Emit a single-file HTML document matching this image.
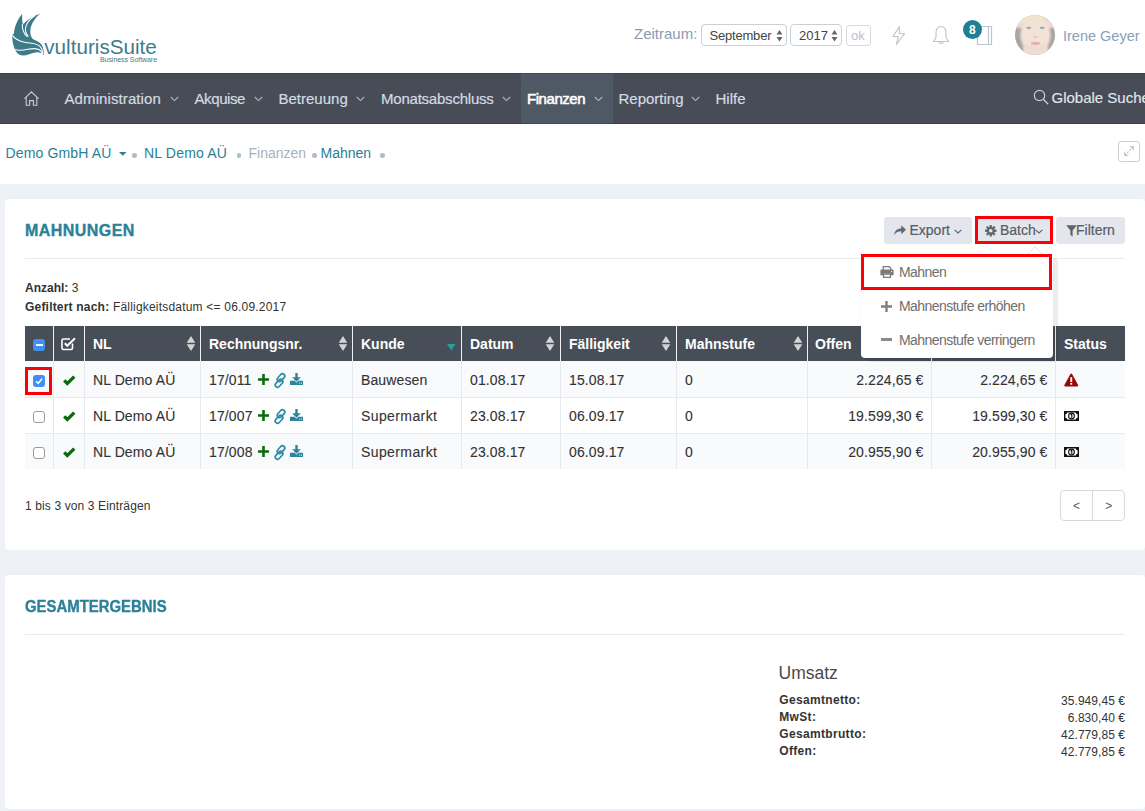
<!DOCTYPE html>
<html><head><meta charset="utf-8">
<style>
*{box-sizing:border-box;margin:0;padding:0}
html,body{width:1145px;height:811px;overflow:hidden;background:#eef1f5;font-family:"Liberation Sans",sans-serif;color:#333}
.a{position:absolute;white-space:nowrap;line-height:1}
svg{position:absolute;overflow:visible}
#top{position:absolute;left:0;top:0;width:1145px;height:73px;background:#fff}
#nav{position:absolute;left:0;top:73px;width:1145px;height:51px;background:#474c57;border-top:1px solid #39414c;border-bottom:1px solid #39414c}
#crumb{position:absolute;left:0;top:124px;width:1145px;height:60px;background:#fff}
.card{position:absolute;left:5px;width:1140px;background:#fff;border-radius:4px}
.nv{font-size:15px;color:#d3dbe3;top:91px;-webkit-text-stroke:0.2px #d3dbe3}
.th{position:absolute;top:326px;height:35px;background:#474e58}
.tht{font-size:14px;font-weight:bold;color:#fff;top:337px}
.row{position:absolute;left:25px;width:1100px;height:37px;border-bottom:1px solid #e6e9ed}
.vl{position:absolute;width:1px;background:#e6e9ed}
.td{font-size:14px;color:#333;letter-spacing:0.12px;-webkit-text-stroke:0.1px #333}
.btn{position:absolute;top:217px;height:27px;background:#e3e7ed;border-radius:3px}
.bt{font-size:14px;color:#585d65;top:223px;-webkit-text-stroke:0.2px #585d65}
.dm{font-size:14px;color:#6e6e6e;letter-spacing:-0.55px}
.sum{font-size:12px;font-weight:bold;color:#333}
.val{font-size:12px;color:#333;text-align:right}
</style></head><body>
<div id="top"></div>
<div id="nav"></div>
<div id="crumb"></div>
<div class="card" style="top:199px;height:351px"></div>
<div class="card" style="top:575px;height:234px"></div>

<!-- LOGO -->
<svg style="left:0;top:0" width="170" height="72" viewBox="0 0 170 72">
 <path fill="#3e7b8a" d="M22.2,13.8 C17.5,19.5 14.4,26.5 13.9,33.7 L12.1,34.6 C12.2,40 12.9,45.5 15.1,49.8 C16.2,52.5 18.5,55 22.2,55.6 C27,55.8 32,52.5 36.5,52.2 C39.5,52 42,53 43.8,55.3 C44,50 43,45.5 40,43 C37.5,41 35,40 33.2,39.2 C31.2,37.8 30,34.5 30.4,30 C31,24.5 34.5,18.5 40.2,13.6 C33,16.5 26.5,20.5 22.8,24.5 C22.2,21 22,17 22.2,13.8 Z"/>
 <g fill="none" stroke="#fff" stroke-width="1.05">
  <path d="M11.3,34.1 C14,38 19,41.5 25.8,42.5 C30,43.1 35,43.3 38.8,45.5 C41.3,47 42.6,50 42.9,54.5"/>
  <path d="M14.3,49.6 C18,50.5 23,50.3 28,49.3 C32,48.5 36,48.3 38.8,49.5 C40.8,50.4 42,52 42.4,54.5"/>
  <path d="M22.4,24 C22,29 23.5,33.5 27.5,36.8"/>
  <path d="M35,15.5 C30,19 26.5,23 25.6,27.5 C25,31 26,34 28.5,36.5"/>
 </g>
 <text x="44.3" y="53.6" font-family="Liberation Sans" font-size="19.8" fill="#3e7b8a" textLength="112.5" lengthAdjust="spacingAndGlyphs">vulturisSuite</text>
 <text x="100" y="62.3" font-family="Liberation Sans" font-size="7" fill="#3e7b8a" textLength="57" lengthAdjust="spacingAndGlyphs">Business Software</text>
</svg>

<!-- ZEITRAUM -->
<div class="a" style="left:634px;top:26px;font-size:15px;color:#8a9bb3">Zeitraum:</div>
<div class="a" style="left:701px;top:24px;width:86px;height:22px;border:1px solid #c9d0d6;border-radius:4px;background:#fff"></div>
<div class="a" style="left:709.5px;top:28.5px;font-size:13px;color:#444;letter-spacing:-0.2px">September</div>
<svg style="left:776px;top:29.5px" width="7" height="12"><path d="M3.5,0 L6.5,4.5 L0.5,4.5 Z M3.5,11.5 L6.5,7 L0.5,7 Z" fill="#666"/></svg>
<div class="a" style="left:790px;top:24px;width:52px;height:22px;border:1px solid #c9d0d6;border-radius:4px;background:#fff"></div>
<div class="a" style="left:799px;top:28.5px;font-size:13px;color:#444">2017</div>
<svg style="left:831px;top:29.5px" width="7" height="12"><path d="M3.5,0 L6.5,4.5 L0.5,4.5 Z M3.5,11.5 L6.5,7 L0.5,7 Z" fill="#666"/></svg>
<div class="a" style="left:846px;top:25px;width:25px;height:21px;border:1px solid #d5dbe0;border-radius:3px;background:#fff"></div>
<div class="a" style="left:851px;top:29px;font-size:13px;color:#b9c3cc">ok</div>

<!-- ICONS -->
<svg style="left:890px;top:24px" width="18" height="22" viewBox="0 0 18 22"><path d="M9.5,2.5 L3,12.5 L8.2,12.5 L6.5,20.5 L14.5,9.5 L9.3,9.5 Z" fill="none" stroke="#bcc6ce" stroke-width="1.2" stroke-linejoin="round"/></svg>
<svg style="left:931px;top:24px" width="20" height="22" viewBox="0 0 20 22"><path d="M10,2.5 C6,2.5 5,6 5,9.5 L5,13.5 L2.5,17.5 L17.5,17.5 L15,13.5 L15,9.5 C15,6 14,2.5 10,2.5 Z M8,18 C8,20 12,20 12,18" fill="none" stroke="#bcc6ce" stroke-width="1.2" stroke-linejoin="round"/></svg>
<svg style="left:975px;top:24px" width="20" height="23" viewBox="0 0 20 23"><path d="M2.5,2.5 L16.5,2.5 L16.5,20.5 L2.5,20.5 Z M13.5,2.5 L13.5,20.5" fill="none" stroke="#bcc6ce" stroke-width="1.2"/></svg>
<div class="a" style="left:963px;top:20px;width:19px;height:19px;border-radius:50%;background:#1f7f94"></div>
<div class="a" style="left:969px;top:23.5px;font-size:12px;font-weight:bold;color:#fff">8</div>

<!-- AVATAR -->
<svg style="left:1015px;top:15px" width="40" height="40" viewBox="0 0 40 40">
 <defs><clipPath id="cp"><circle cx="20" cy="20" r="20"/></clipPath>
 <filter id="bl" x="-0.5" y="-0.5" width="2" height="2"><feGaussianBlur stdDeviation="1.3"/></filter>
 <filter id="bl2" x="-0.5" y="-0.5" width="2" height="2"><feGaussianBlur stdDeviation="0.6"/></filter>
 </defs>
 <g clip-path="url(#cp)">
  <rect width="40" height="40" fill="#a8a5a2"/>
  <g filter="url(#bl)">
   <rect x="-2" y="-2" width="44" height="15" fill="#ecdccd"/>
   <ellipse cx="20.5" cy="20" rx="15" ry="18" fill="#f3e2d7"/>
   <rect x="8" y="30" width="25" height="14" fill="#efdcd0"/>
   <ellipse cx="15" cy="4" rx="14" ry="6" fill="#f2e3cf"/>
  </g>
  <g filter="url(#bl2)">
   <ellipse cx="13.8" cy="12.8" rx="2.6" ry="1.1" fill="#95a6ab"/>
   <ellipse cx="27.2" cy="12.8" rx="2.6" ry="1.1" fill="#95a6ab"/>
   <ellipse cx="20.6" cy="28.3" rx="4.8" ry="1.6" fill="#e2b3a8"/>
   <ellipse cx="20.5" cy="22" rx="2" ry="1.1" fill="#e3c6b9"/>
  </g>
 </g>
</svg>
<div class="a" style="left:1063px;top:29px;font-size:14.5px;color:#8aa0b8">Irene Geyer</div>

<!-- NAV -->
<svg style="left:23px;top:90px" width="17" height="17" viewBox="0 0 17 17"><path d="M1.5,8.6 L8.5,1.8 L15.5,8.6 M3.2,7.2 L3.2,15.2 L6.6,15.2 L6.6,10.6 L10.4,10.6 L10.4,15.2 L13.8,15.2 L13.8,7.2" fill="none" stroke="#c5ccd3" stroke-width="1.1" stroke-linejoin="miter"/></svg>
<div class="a nv" style="left:64.5px;letter-spacing:0.1px">Administration</div><svg style="left:169.5px;top:96px" width="9" height="6" viewBox="0 0 9 6"><path d="M0.8,1 L4.5,4.6 L8.2,1" fill="none" stroke="#aeb7c0" stroke-width="1.1"/></svg>
<div class="a nv" style="left:194.5px;letter-spacing:-0.4px">Akquise</div><svg style="left:254px;top:96px" width="9" height="6" viewBox="0 0 9 6"><path d="M0.8,1 L4.5,4.6 L8.2,1" fill="none" stroke="#aeb7c0" stroke-width="1.1"/></svg>
<div class="a nv" style="left:278.5px">Betreuung</div><svg style="left:356px;top:96px" width="9" height="6" viewBox="0 0 9 6"><path d="M0.8,1 L4.5,4.6 L8.2,1" fill="none" stroke="#aeb7c0" stroke-width="1.1"/></svg>
<div class="a nv" style="left:381px;letter-spacing:-0.22px">Monatsabschluss</div><svg style="left:501.5px;top:96px" width="9" height="6" viewBox="0 0 9 6"><path d="M0.8,1 L4.5,4.6 L8.2,1" fill="none" stroke="#aeb7c0" stroke-width="1.1"/></svg>
<div class="a" style="left:521px;top:73px;width:92px;height:51px;background:#4e5965;border-top:1px solid #404a55;border-bottom:1px solid #404a55"></div>
<div class="a nv" style="left:527px;color:#fff;-webkit-text-stroke:0.55px #fff;letter-spacing:-0.45px">Finanzen</div><svg style="left:594px;top:96px" width="9" height="6" viewBox="0 0 9 6"><path d="M0.8,1 L4.5,4.6 L8.2,1" fill="none" stroke="#aeb7c0" stroke-width="1.1"/></svg>
<div class="a nv" style="left:618.5px">Reporting</div><svg style="left:691px;top:96px" width="9" height="6" viewBox="0 0 9 6"><path d="M0.8,1 L4.5,4.6 L8.2,1" fill="none" stroke="#aeb7c0" stroke-width="1.1"/></svg>
<div class="a nv" style="left:715.5px">Hilfe</div>
<svg style="left:1033px;top:89px" width="17" height="17" viewBox="0 0 17 17"><circle cx="6.5" cy="6.5" r="5.2" fill="none" stroke="#c5ccd3" stroke-width="1.2"/><path d="M10.3,10.3 L15.2,15.2" stroke="#c5ccd3" stroke-width="1.3"/></svg>
<div class="a nv" style="left:1051.5px;top:90px;color:#e3e7eb">Globale Suche</div>

<!-- BREADCRUMB -->
<div class="a" style="left:5.5px;top:145.5px;font-size:14px;color:#2a7f96;letter-spacing:0.15px">Demo GmbH AÜ</div>
<svg style="left:119px;top:152px" width="8" height="4"><path d="M0,0 L7.5,0 L3.75,3.7 Z" fill="#2a7f96"/></svg>
<div class="a" style="left:132px;top:153px;width:4.6px;height:4.6px;border-radius:50%;background:#b3bcc5"></div>
<div class="a" style="left:144px;top:145.5px;font-size:14px;color:#2a7f96;letter-spacing:0.2px">NL Demo AÜ</div>
<div class="a" style="left:236.5px;top:153px;width:4.6px;height:4.6px;border-radius:50%;background:#b3bcc5"></div>
<div class="a" style="left:248.5px;top:145.5px;font-size:14px;color:#a7b1bb">Finanzen</div>
<div class="a" style="left:312px;top:153px;width:4.6px;height:4.6px;border-radius:50%;background:#b3bcc5"></div>
<div class="a" style="left:320.5px;top:145.5px;font-size:14px;color:#2a7f96">Mahnen</div>
<div class="a" style="left:380.2px;top:153px;width:4.6px;height:4.6px;border-radius:50%;background:#b3bcc5"></div>
<div class="a" style="left:1118px;top:141px;width:22px;height:21px;border:1px solid #c8d0d5;border-radius:3px;background:#fff"></div>
<svg style="left:1118px;top:141px" width="22" height="21" viewBox="0 0 22 21"><path d="M6.5,14.5 L15,6" fill="none" stroke="#c3cbd1" stroke-width="1.3" stroke-dasharray="2.2 1.3"/><path d="M11.5,5 L16,5 L16,9.5 Z M6,10.5 L6,15 L10.5,15 Z" fill="#c3cbd1"/></svg>

<!-- CARD 1 -->
<div class="a" style="left:25px;top:223.3px;font-size:16px;font-weight:bold;color:#2a8198;letter-spacing:0.45px;-webkit-text-stroke:0.35px #2a8198">MAHNUNGEN</div>
<div class="a" style="left:25px;top:258px;width:1100px;height:1px;background:#e8ebee"></div>

<div class="btn" style="left:884px;width:88px"></div>
<svg style="left:893px;top:224px" width="14" height="12" viewBox="0 0 16 14"><path d="M1.2,13 C1.5,8 4.5,5.2 9.5,5.2 L9.5,1.6 L15,6.8 L9.5,12 L9.5,8.4 C5.5,8.4 3,9.6 1.2,13 Z" fill="#626770"/></svg>
<div class="a bt" style="left:909.5px">Export</div>
<svg style="left:953.5px;top:228.5px" width="8" height="5" viewBox="0 0 8 5"><path d="M0.6,0.8 L4,4 L7.4,0.8" fill="none" stroke="#5e636b" stroke-width="1.1"/></svg>

<div class="btn" style="left:975px;width:78px"></div>
<div class="a" style="left:975px;top:216px;width:78px;height:28px;border:3px solid #fb0007"></div>
<svg style="left:985px;top:224.6px" width="11.5" height="11.5" viewBox="0 0 13 13"><g fill="#626770"><circle cx="6.5" cy="6.5" r="4.5"/><rect x="5.2" y="0" width="2.6" height="13" rx="0.6"/><rect x="0" y="5.2" width="13" height="2.6" rx="0.6"/><rect x="5.2" y="0" width="2.6" height="13" rx="0.6" transform="rotate(45 6.5 6.5)"/><rect x="5.2" y="0" width="2.6" height="13" rx="0.6" transform="rotate(-45 6.5 6.5)"/></g><circle cx="6.5" cy="6.5" r="2" fill="#e3e7ed"/></svg>
<div class="a bt" style="left:1000px">Batch</div>
<svg style="left:1035px;top:228.5px" width="8" height="5" viewBox="0 0 8 5"><path d="M0.6,0.8 L4,4 L7.4,0.8" fill="none" stroke="#5e636b" stroke-width="1.1"/></svg>

<div class="btn" style="left:1056px;width:69px"></div>
<svg style="left:1066px;top:224.5px" width="11" height="12" viewBox="0 0 11 12"><path d="M0.2,0.3 L10.8,0.3 L6.6,5.6 L6.6,11.7 L4.4,9.8 L4.4,5.6 Z" fill="#5e636b"/></svg>
<div class="a bt" style="left:1076px">Filtern</div>

<div class="a" style="left:25px;top:281.8px;font-size:12px;color:#333"><b>Anzahl:</b> 3</div>
<div class="a" style="left:25px;top:300.6px;font-size:12px;color:#333;letter-spacing:0.2px"><b>Gefiltert nach:</b> Fälligkeitsdatum &lt;= 06.09.2017</div>

<!-- TABLE HEADER -->
<div class="th" style="left:25px;width:28px"></div>
<div class="th" style="left:54px;width:30px"></div>
<div class="th" style="left:85px;width:115px"></div>
<div class="th" style="left:201px;width:151px"></div>
<div class="th" style="left:353px;width:108px"></div>
<div class="th" style="left:462px;width:98px"></div>
<div class="th" style="left:561px;width:115px"></div>
<div class="th" style="left:677px;width:130px"></div>
<div class="th" style="left:808px;width:123px"></div>
<div class="th" style="left:932px;width:123px"></div>
<div class="th" style="left:1056px;width:69px"></div>

<div class="a" style="left:33px;top:339px;width:12px;height:12px;border-radius:3px;background:#3f8ff5"></div>
<div class="a" style="left:35.5px;top:344.3px;width:7px;height:1.8px;background:#fff"></div>
<svg style="left:61px;top:337px" width="16" height="14" viewBox="0 0 16 14"><path d="M11.5,6.5 L11.5,11 C11.5,12 11,12.5 10,12.5 L2.5,12.5 C1.5,12.5 1,12 1,11 L1,3.5 C1,2.5 1.5,2 2.5,2 L9,2" fill="none" stroke="#fff" stroke-width="1.6"/><path d="M3.8,6.3 L6.3,8.8 L14,1.2" fill="none" stroke="#fff" stroke-width="2"/></svg>
<div class="a tht" style="left:93px">NL</div><svg style="left:185.5px;top:335.8px" width="10" height="15" viewBox="0 0 10 15"><path d="M5,0 L9.3,6.8 L0.7,6.8 Z M5,15 L9.3,8.2 L0.7,8.2 Z" fill="#d2d3d5"/></svg>
<div class="a tht" style="left:209px">Rechnungsnr.</div><svg style="left:337.5px;top:335.8px" width="10" height="15" viewBox="0 0 10 15"><path d="M5,0 L9.3,6.8 L0.7,6.8 Z M5,15 L9.3,8.2 L0.7,8.2 Z" fill="#d2d3d5"/></svg>
<div class="a tht" style="left:361px">Kunde</div>
<svg style="left:447px;top:344px" width="9" height="7"><path d="M0,0 L8.6,0 L4.3,6.6 Z" fill="#20a39b"/></svg>
<div class="a tht" style="left:470px">Datum</div><svg style="left:545.0px;top:335.8px" width="10" height="15" viewBox="0 0 10 15"><path d="M5,0 L9.3,6.8 L0.7,6.8 Z M5,15 L9.3,8.2 L0.7,8.2 Z" fill="#d2d3d5"/></svg>
<div class="a tht" style="left:569px">Fälligkeit</div><svg style="left:661.0px;top:335.8px" width="10" height="15" viewBox="0 0 10 15"><path d="M5,0 L9.3,6.8 L0.7,6.8 Z M5,15 L9.3,8.2 L0.7,8.2 Z" fill="#d2d3d5"/></svg>
<div class="a tht" style="left:685px">Mahnstufe</div><svg style="left:792.5px;top:335.8px" width="10" height="15" viewBox="0 0 10 15"><path d="M5,0 L9.3,6.8 L0.7,6.8 Z M5,15 L9.3,8.2 L0.7,8.2 Z" fill="#d2d3d5"/></svg>
<div class="a tht" style="left:815px">Offen</div>
<div class="a tht" style="left:1064px">Status</div>
<div class="row" style="top:361px;background:#f9fafc"></div>
<div class="a" style="left:33px;top:375px;width:12px;height:12px;border-radius:3px;background:#3f8ff5"></div><svg style="left:33px;top:375px" width="12" height="12" viewBox="0 0 12 12"><path d="M3,6.2 L5.2,8.4 L9.2,3.6" fill="none" stroke="#fff" stroke-width="1.5"/></svg><svg style="left:62px;top:375px" width="14" height="11" viewBox="0 0 14 11"><path d="M2.2,5.3 L5.3,8.4 L12.3,1.6" fill="none" stroke="#0b6b0b" stroke-width="3.3" stroke-linejoin="miter"/></svg><div class="a td" style="left:93px;top:373.15px">NL Demo AÜ</div><div class="a td" style="left:209px;top:373.15px">17/011</div><svg style="left:257.8px;top:374.0px" width="11" height="11" viewBox="0 0 11 11"><path d="M4.2,0 H6.8 V4.2 H11 V6.8 H6.8 V11 H4.2 V6.8 H0 V4.2 H4.2 Z" fill="#0b6b0b"/></svg><svg style="left:273px;top:372.5px" width="14" height="15" viewBox="0 0 14 15"><g transform="rotate(-47 7 7.5)" fill="none" stroke="#2b8ca5" stroke-width="1.7"><rect x="5.2" y="4" width="9" height="4.6" rx="2.3"/><rect x="-0.2" y="6.4" width="9" height="4.6" rx="2.3"/></g></svg><svg style="left:290px;top:373.0px" width="13" height="13" viewBox="0 0 13 13"><path d="M5.3,0 H7.7 V4.2 H10.8 L6.5,8.8 L2.2,4.2 H5.3 Z" fill="#2a849c"/><path d="M0,7.8 H4.6 L6.5,9.8 L8.4,7.8 H13 V12 H0 Z" fill="#2a849c"/><rect x="9.2" y="9.6" width="1" height="1" fill="#fff"/><rect x="10.9" y="9.6" width="1" height="1" fill="#fff"/></svg><div class="a td" style="left:361px;top:373.15px">Bauwesen</div><div class="a td" style="left:470px;top:373.15px">01.08.17</div><div class="a td" style="left:569px;top:373.15px">15.08.17</div><div class="a td" style="left:685px;top:373.15px">0</div><div class="a td" style="right:221.5px;top:373.15px">2.224,65 €</div><div class="a td" style="right:97.5px;top:373.15px">2.224,65 €</div><svg style="left:1064px;top:373px" width="14.5" height="13.5" viewBox="0 0 14.5 13.5"><path d="M6.3,1.2 C6.7,0.4 7.8,0.4 8.2,1.2 L14.1,11.9 C14.5,12.6 14,13.4 13.2,13.4 L1.3,13.4 C0.5,13.4 0,12.6 0.4,11.9 Z" fill="#960a0a"/><rect x="6.3" y="4.2" width="1.9" height="4.8" fill="#fff"/><rect x="6.3" y="9.9" width="1.9" height="1.8" fill="#fff"/></svg>
<div class="row" style="top:398px;height:36px;background:#fff"></div>
<div class="a" style="left:33px;top:411px;width:12px;height:12px;border-radius:3px;border:1px solid #9a9a9a;background:#fff"></div><svg style="left:62px;top:411px" width="14" height="11" viewBox="0 0 14 11"><path d="M2.2,5.3 L5.3,8.4 L12.3,1.6" fill="none" stroke="#0b6b0b" stroke-width="3.3" stroke-linejoin="miter"/></svg><div class="a td" style="left:93px;top:409.15px">NL Demo AÜ</div><div class="a td" style="left:209px;top:409.15px">17/007</div><svg style="left:257.8px;top:410.0px" width="11" height="11" viewBox="0 0 11 11"><path d="M4.2,0 H6.8 V4.2 H11 V6.8 H6.8 V11 H4.2 V6.8 H0 V4.2 H4.2 Z" fill="#0b6b0b"/></svg><svg style="left:273px;top:408.5px" width="14" height="15" viewBox="0 0 14 15"><g transform="rotate(-47 7 7.5)" fill="none" stroke="#2b8ca5" stroke-width="1.7"><rect x="5.2" y="4" width="9" height="4.6" rx="2.3"/><rect x="-0.2" y="6.4" width="9" height="4.6" rx="2.3"/></g></svg><svg style="left:290px;top:409.0px" width="13" height="13" viewBox="0 0 13 13"><path d="M5.3,0 H7.7 V4.2 H10.8 L6.5,8.8 L2.2,4.2 H5.3 Z" fill="#2a849c"/><path d="M0,7.8 H4.6 L6.5,9.8 L8.4,7.8 H13 V12 H0 Z" fill="#2a849c"/><rect x="9.2" y="9.6" width="1" height="1" fill="#fff"/><rect x="10.9" y="9.6" width="1" height="1" fill="#fff"/></svg><div class="a td" style="left:361px;top:409.15px;letter-spacing:0.4px">Supermarkt</div><div class="a td" style="left:470px;top:409.15px">23.08.17</div><div class="a td" style="left:569px;top:409.15px">06.09.17</div><div class="a td" style="left:685px;top:409.15px">0</div><div class="a td" style="right:221.5px;top:409.15px">19.599,30 €</div><div class="a td" style="right:97.5px;top:409.15px">19.599,30 €</div><svg style="left:1064px;top:411px" width="15" height="10" viewBox="0 0 15 10"><rect x="0" y="0" width="15" height="10" fill="#111"/><path d="M3.3,1.4 H11.7 A2.1,2.1 0 0 0 13.6,3.3 V6.7 A2.1,2.1 0 0 0 11.7,8.6 H3.3 A2.1,2.1 0 0 0 1.4,6.7 V3.3 A2.1,2.1 0 0 0 3.3,1.4 Z" fill="#fff"/><circle cx="7.5" cy="5" r="2.9" fill="#fff" stroke="#111" stroke-width="1.1"/><path d="M6.6,3.9 L7.8,3.2 V6.9" fill="none" stroke="#111" stroke-width="1.1"/></svg>
<div class="row" style="top:434px;background:#f9fafc;border-bottom:none;height:35px"></div>
<div class="a" style="left:33px;top:447px;width:12px;height:12px;border-radius:3px;border:1px solid #9a9a9a;background:#fff"></div><svg style="left:62px;top:447px" width="14" height="11" viewBox="0 0 14 11"><path d="M2.2,5.3 L5.3,8.4 L12.3,1.6" fill="none" stroke="#0b6b0b" stroke-width="3.3" stroke-linejoin="miter"/></svg><div class="a td" style="left:93px;top:445.15px">NL Demo AÜ</div><div class="a td" style="left:209px;top:445.15px">17/008</div><svg style="left:257.8px;top:446.0px" width="11" height="11" viewBox="0 0 11 11"><path d="M4.2,0 H6.8 V4.2 H11 V6.8 H6.8 V11 H4.2 V6.8 H0 V4.2 H4.2 Z" fill="#0b6b0b"/></svg><svg style="left:273px;top:444.5px" width="14" height="15" viewBox="0 0 14 15"><g transform="rotate(-47 7 7.5)" fill="none" stroke="#2b8ca5" stroke-width="1.7"><rect x="5.2" y="4" width="9" height="4.6" rx="2.3"/><rect x="-0.2" y="6.4" width="9" height="4.6" rx="2.3"/></g></svg><svg style="left:290px;top:445.0px" width="13" height="13" viewBox="0 0 13 13"><path d="M5.3,0 H7.7 V4.2 H10.8 L6.5,8.8 L2.2,4.2 H5.3 Z" fill="#2a849c"/><path d="M0,7.8 H4.6 L6.5,9.8 L8.4,7.8 H13 V12 H0 Z" fill="#2a849c"/><rect x="9.2" y="9.6" width="1" height="1" fill="#fff"/><rect x="10.9" y="9.6" width="1" height="1" fill="#fff"/></svg><div class="a td" style="left:361px;top:445.15px;letter-spacing:0.4px">Supermarkt</div><div class="a td" style="left:470px;top:445.15px">23.08.17</div><div class="a td" style="left:569px;top:445.15px">06.09.17</div><div class="a td" style="left:685px;top:445.15px">0</div><div class="a td" style="right:221.5px;top:445.15px">20.955,90 €</div><div class="a td" style="right:97.5px;top:445.15px">20.955,90 €</div><svg style="left:1064px;top:447px" width="15" height="10" viewBox="0 0 15 10"><rect x="0" y="0" width="15" height="10" fill="#111"/><path d="M3.3,1.4 H11.7 A2.1,2.1 0 0 0 13.6,3.3 V6.7 A2.1,2.1 0 0 0 11.7,8.6 H3.3 A2.1,2.1 0 0 0 1.4,6.7 V3.3 A2.1,2.1 0 0 0 3.3,1.4 Z" fill="#fff"/><circle cx="7.5" cy="5" r="2.9" fill="#fff" stroke="#111" stroke-width="1.1"/><path d="M6.6,3.9 L7.8,3.2 V6.9" fill="none" stroke="#111" stroke-width="1.1"/></svg>
<div class="vl" style="left:53px;top:361px;height:108px"></div><div class="vl" style="left:84px;top:361px;height:108px"></div><div class="vl" style="left:200px;top:361px;height:108px"></div><div class="vl" style="left:352px;top:361px;height:108px"></div><div class="vl" style="left:461px;top:361px;height:108px"></div><div class="vl" style="left:560px;top:361px;height:108px"></div><div class="vl" style="left:676px;top:361px;height:108px"></div><div class="vl" style="left:807px;top:361px;height:108px"></div><div class="vl" style="left:931px;top:361px;height:108px"></div><div class="vl" style="left:1055px;top:361px;height:108px"></div><div class="vl" style="left:53px;top:326px;height:35px;background:#f0f2f4"></div><div class="vl" style="left:84px;top:326px;height:35px;background:#f0f2f4"></div><div class="vl" style="left:200px;top:326px;height:35px;background:#f0f2f4"></div><div class="vl" style="left:352px;top:326px;height:35px;background:#f0f2f4"></div><div class="vl" style="left:461px;top:326px;height:35px;background:#f0f2f4"></div><div class="vl" style="left:560px;top:326px;height:35px;background:#f0f2f4"></div><div class="vl" style="left:676px;top:326px;height:35px;background:#f0f2f4"></div><div class="vl" style="left:807px;top:326px;height:35px;background:#f0f2f4"></div><div class="vl" style="left:931px;top:326px;height:35px;background:#f0f2f4"></div><div class="vl" style="left:1055px;top:326px;height:35px;background:#f0f2f4"></div>
<!-- red box around first checkbox -->
<div class="a" style="left:25px;top:367px;width:27px;height:28px;border:3px solid #fb0007"></div>

<!-- FOOTER -->
<div class="a" style="left:25px;top:499.8px;font-size:12px;color:#333;letter-spacing:0.12px">1 bis 3 von 3 Einträgen</div>
<div class="a" style="left:1060px;top:490px;width:65px;height:31px;border:1px solid #d6dadf;border-radius:4px;background:#fff"></div>
<div class="a" style="left:1092px;top:491px;width:1px;height:29px;background:#d6dadf"></div>
<div class="a" style="left:1073px;top:499.7px;font-size:12px;color:#5a5a5a">&lt;</div>
<div class="a" style="left:1105.3px;top:499.7px;font-size:12px;color:#5a5a5a">&gt;</div>

<!-- DROPDOWN -->
<div class="a" style="left:861px;top:254px;width:192px;height:104px;background:#fff;border-radius:4px;box-shadow:5px 4px 0 rgba(0,0,0,0.075),0 0 1px rgba(0,0,0,0.15)"></div>
<svg style="left:1027px;top:246px" width="16" height="9"><path d="M0.5,8.5 L8,1 L15.5,8.5" fill="#fff" stroke="#e2e4e6" stroke-width="1"/></svg>
<div class="a" style="left:861px;top:254px;width:191px;height:36px;border:3px solid #fb0007"></div>
<svg style="left:880px;top:266px" width="14" height="12" viewBox="0 0 14 12"><path d="M3.2,4 V0.7 H9 L10.8,2.4 V4" fill="none" stroke="#7a7a7a" stroke-width="1.3"/><path d="M1.5,3.6 H12.5 C13.2,3.6 13.6,4 13.6,4.7 V9.2 H11 V7.6 H3 V9.2 H0.4 V4.7 C0.4,4 0.8,3.6 1.5,3.6 Z" fill="#7a7a7a"/><path d="M3.6,8 H10.4 V11.3 H3.6 Z" fill="none" stroke="#7a7a7a" stroke-width="1.3"/><rect x="11.2" y="5" width="1" height="1" fill="#fff"/></svg>
<div class="a dm" style="left:899px;top:265.2px">Mahnen</div>
<svg style="left:880.5px;top:300.5px" width="11" height="11" viewBox="0 0 11 11"><path d="M4.3,0 H6.7 V4.3 H11 V6.7 H6.7 V11 H4.3 V6.7 H0 V4.3 H4.3 Z" fill="#808080"/></svg>
<div class="a dm" style="left:899px;top:299.1px">Mahnenstufe erhöhen</div>
<div class="a" style="left:880.8px;top:338.3px;width:11.4px;height:2.8px;background:#8a8a8a"></div>
<div class="a dm" style="left:899px;top:333.2px">Mahnenstufe verringern</div>

<!-- CARD 2 -->
<div class="a" style="left:25px;top:599.3px;font-size:16px;font-weight:bold;color:#2a8198;transform:scaleX(0.932);transform-origin:0 0;-webkit-text-stroke:0.35px #2a8198">GESAMTERGEBNIS</div>
<div class="a" style="left:25px;top:634px;width:1100px;height:1px;background:#e8ebee"></div>
<div class="a" style="left:778.5px;top:665.3px;font-size:17.5px;color:#4a4a4a;font-weight:normal">Umsatz</div>
<div class="a sum" style="left:779.3px;top:694.4px;letter-spacing:0.33px">Gesamtnetto:</div>
<div class="a sum" style="left:779.3px;top:711.4px;letter-spacing:0.33px">MwSt:</div>
<div class="a sum" style="left:779.3px;top:728.4px;letter-spacing:0.33px">Gesamtbrutto:</div>
<div class="a sum" style="left:779.3px;top:745.4px;letter-spacing:0.33px">Offen:</div>
<div class="a val" style="right:20px;top:694.6px;letter-spacing:0.05px">35.949,45 €</div>
<div class="a val" style="right:20px;top:711.6px;letter-spacing:0.05px">6.830,40 €</div>
<div class="a val" style="right:20px;top:728.6px;letter-spacing:0.05px">42.779,85 €</div>
<div class="a val" style="right:20px;top:745.6px;letter-spacing:0.05px">42.779,85 €</div>
</body></html>
